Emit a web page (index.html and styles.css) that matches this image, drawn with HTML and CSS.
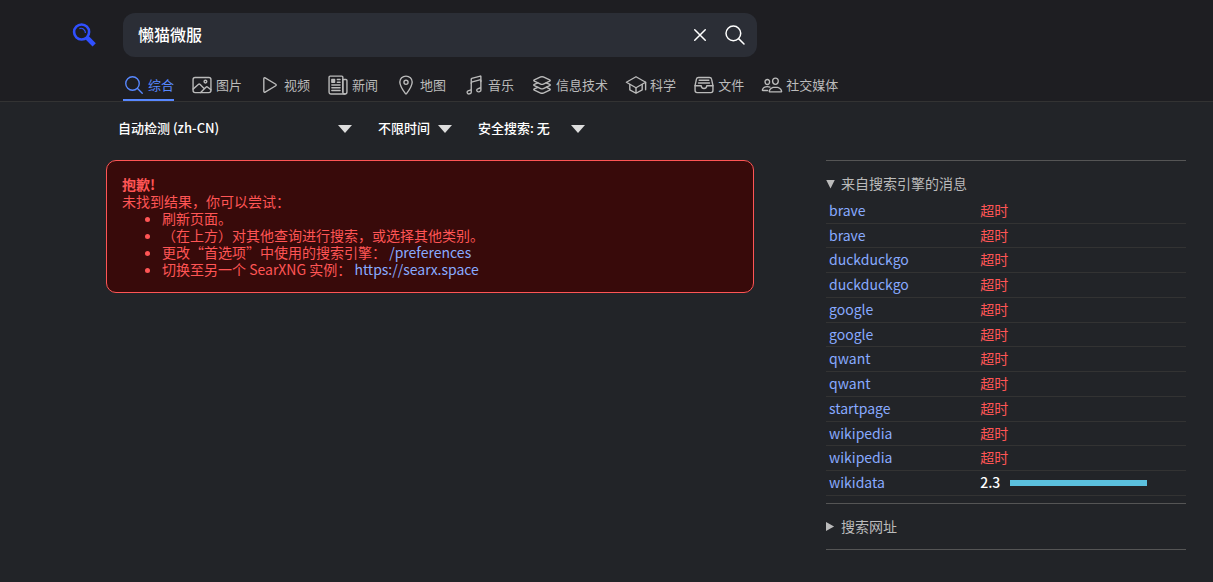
FILE: index.html
```html
<!DOCTYPE html>
<html lang="zh-CN">
<head>
    <meta charset="UTF-8">
    <meta name="viewport" content="width=device-width, initial-scale=1.0">
    <title>懒猫微服 - SearXNG</title>
    <link rel="stylesheet" href="styles.css">
</head>
<body>
    <header class="header">
        <form class="search" role="search">
            <a class="logo" href="#" aria-label="SearXNG">
                <svg viewBox="0 0 24 24" fill="none" stroke="currentColor">
                    <circle cx="9.6" cy="9" r="7.5" stroke-width="2.6"/>
                    <path d="M7.4 5.6a4.4 4.4 0 0 1 6 4.4" stroke-width="1.2"/>
                    <path d="M15 14.6l7.2 7.2" stroke-width="4.6"/>
                </svg>
            </a>
            <div class="search-box">
                <input class="search-input" type="text" value="懒猫微服" aria-label="搜索">
                <button class="search-btn" type="reset" aria-label="清空">
                    <svg class="icon" viewBox="0 0 512 512"><path d="M368 368L144 144M368 144L144 368"/></svg>
                </button>
                <button class="search-btn" type="submit" aria-label="搜索">
                    <svg class="icon" viewBox="0 0 512 512"><path d="M221.09 64a157.09 157.09 0 10157.09 157.09A157.1 157.1 0 00221.09 64zM338.29 338.29L448 448"/></svg>
                </button>
            </div>
        </form>

        <nav class="categories">
            <a class="category active" href="#">
                <svg class="icon" viewBox="0 0 512 512"><path d="M221.09 64a157.09 157.09 0 10157.09 157.09A157.1 157.1 0 00221.09 64zM338.29 338.29L448 448"/></svg>
                <span>综合</span>
            </a>
            <a class="category" href="#">
                <svg class="icon" viewBox="0 0 512 512"><rect x="48" y="80" width="416" height="352" rx="48"/><circle cx="336" cy="176" r="32"/><path d="M304 335.79l-90.66-90.49a32 32 0 00-43.87-1.3L48 352M224 432l123.34-123.34a32 32 0 0143.11-2L464 368"/></svg>
                <span>图片</span>
            </a>
            <a class="category" href="#">
                <svg class="icon" viewBox="0 0 512 512"><path d="M112 111v290c0 17.44 17 28.52 31 20.16l247.9-148.37c12.12-7.25 12.12-26.33 0-33.58L143 90.84c-14-8.36-31 2.72-31 20.16z"/></svg>
                <span>视频</span>
            </a>
            <a class="category" href="#">
                <svg class="icon" viewBox="0 0 512 512"><path d="M368 415.86V72a24.07 24.07 0 00-24-24H72a24.07 24.07 0 00-24 24v352a40.12 40.12 0 0040 40h328"/><path d="M416 464h0a48 48 0 01-48-48V128h72a24 24 0 0124 24v264a48 48 0 01-48 48z"/><path d="M240 128h64M240 192h64M112 256h192M112 320h192M112 384h192"/><path class="solid" d="M176 208h-64a16 16 0 01-16-16v-64a16 16 0 0116-16h64a16 16 0 0116 16v64a16 16 0 01-16 16z"/></svg>
                <span>新闻</span>
            </a>
            <a class="category" href="#">
                <svg class="icon" viewBox="0 0 512 512"><path d="M256 48c-79.5 0-144 61.39-144 137 0 87 96 224.87 131.25 272.49a15.77 15.77 0 0025.5 0C304 409.89 400 272.07 400 185c0-75.61-64.5-137-144-137z"/><circle cx="256" cy="192" r="48"/></svg>
                <span>地图</span>
            </a>
            <a class="category" href="#">
                <svg class="icon" viewBox="0 0 512 512"><path d="M192 218v-6c0-14.84 10-27 24.24-30.59l174.59-46.68A20 20 0 01416 154v22"/><path d="M416 295.94v80c0 13.91-8.93 25.59-22 30l-22 8c-25.9 8.72-52-10.42-52-38h0a33.37 33.37 0 0123-32l51-18.15c13.07-4.4 22-15.94 22-29.85V58a10 10 0 00-12.6-9.61L204 102a16.48 16.48 0 00-12 16v226c0 13.91-8.93 25.6-22 30l-52 18c-13.88 4.68-22 17.22-22 32h0c0 27.58 26.52 46.55 52 38l22-8c13.07-4.4 22-16.08 22-30v-80"/></svg>
                <span>音乐</span>
            </a>
            <a class="category" href="#">
                <svg class="icon" viewBox="0 0 512 512"><path d="M434.8 137.65l-149.36-68.1c-16.19-7.4-42.69-7.4-58.88 0L77.3 137.65c-17.6 8-17.6 21.09 0 29.09l148 67.5c16.89 7.7 44.69 7.7 61.58 0l148-67.5c17.52-8 17.52-21.1-.08-29.09z"/><path d="M160 308.52l-82.7 37.11c-17.6 8-17.6 21.1 0 29.1l148 67.5c16.89 7.69 44.69 7.69 61.58 0l148-67.5c17.6-8 17.6-21.1 0-29.1l-79.94-38.47"/><path d="M160 204.48l-82.8 37.16c-17.6 8-17.6 21.1 0 29.1l148 67.49c16.89 7.7 44.69 7.7 61.58 0l148-67.49c17.7-8 17.7-21.1.1-29.1L352 204.48"/></svg>
                <span>信息技术</span>
            </a>
            <a class="category" href="#">
                <svg class="icon" viewBox="0 0 512 512"><path d="M32 192L256 64l224 128-224 128L32 192z"/><path d="M112 240v128l144 80 144-80V240M480 368V192M256 320v128"/></svg>
                <span>科学</span>
            </a>
            <a class="category" href="#">
                <svg class="icon" viewBox="0 0 512 512"><path d="M384 80H128c-26 0-43 14-48 40L48 272v112a48.14 48.14 0 0048 48h320a48.14 48.14 0 0048-48V272l-32-152c-5-27-23-40-48-40z"/><path d="M48 272h144M320 272h144M192 272a64 64 0 00128 0M144 144h224M128 208h256"/></svg>
                <span>文件</span>
            </a>
            <a class="category" href="#">
                <svg class="icon" viewBox="0 0 512 512"><path d="M402 168c-2.93 40.67-33.1 72-66 72s-63.12-31.32-66-72c-3-42.31 26.37-72 66-72s69 30.46 66 72z"/><path d="M336 304c-65.17 0-127.84 32.37-143.54 95.41-2.08 8.34 3.15 16.59 11.72 16.59h263.65c8.57 0 13.77-8.25 11.72-16.59C463.85 335.36 401.18 304 336 304z"/><path d="M200 185.94c-2.34 32.48-26.72 58.06-53 58.06s-50.7-25.57-53-58.06C91.61 152.15 115.34 128 147 128s55.39 24.77 53 57.94z"/><path d="M206 306c-18.05-8.27-37.93-11.45-59-11.45-52 0-102.1 25.85-114.65 76.2-1.65 6.66 2.53 13.25 9.37 13.25H154"/></svg>
                <span>社交媒体</span>
            </a>
        </nav>
    </header>

    <div class="filters">
        <select class="filter language" aria-label="搜索语言">
            <option>自动检测 (zh-CN)</option>
        </select>
        <select class="filter time" aria-label="时间范围">
            <option>不限时间</option>
        </select>
        <select class="filter safe" aria-label="安全搜索">
            <option>安全搜索: 无</option>
        </select>
    </div>

    <div class="results">
        <main>
            <div class="error-box" role="alert">
                <p><strong>抱歉!</strong></p>
                <p>未找到结果，你可以尝试：</p>
                <ul>
                    <li>刷新页面。</li>
                    <li>（在上方）对其他查询进行搜索，或选择其他类别。</li>
                    <li>更改“首选项”中使用的搜索引擎： <a href="#">/preferences</a></li>
                    <li>切换至另一个 SearXNG 实例： <a href="#">https://searx.space</a></li>
                </ul>
            </div>
        </main>

        <aside class="sidebar">
            <details class="panel" open>
                <summary>来自搜索引擎的消息</summary>
                <table class="engines">
                    <tr><td><a href="#">brave</a></td><td class="timeout">超时</td></tr>
                    <tr><td><a href="#">brave</a></td><td class="timeout">超时</td></tr>
                    <tr><td><a href="#">duckduckgo</a></td><td class="timeout">超时</td></tr>
                    <tr><td><a href="#">duckduckgo</a></td><td class="timeout">超时</td></tr>
                    <tr><td><a href="#">google</a></td><td class="timeout">超时</td></tr>
                    <tr><td><a href="#">google</a></td><td class="timeout">超时</td></tr>
                    <tr><td><a href="#">qwant</a></td><td class="timeout">超时</td></tr>
                    <tr><td><a href="#">qwant</a></td><td class="timeout">超时</td></tr>
                    <tr><td><a href="#">startpage</a></td><td class="timeout">超时</td></tr>
                    <tr><td><a href="#">wikipedia</a></td><td class="timeout">超时</td></tr>
                    <tr><td><a href="#">wikipedia</a></td><td class="timeout">超时</td></tr>
                    <tr>
                        <td><a href="#">wikidata</a></td>
                        <td><div class="timing"><span>2.3</span><div class="bar-track"><div class="bar" style="width: 79%"></div></div></div></td>
                    </tr>
                </table>
            </details>
            <details class="panel">
                <summary>搜索网址</summary>
            </details>
        </aside>
    </div>
</body>
</html>
```
FILE: styles.css
```css
:root {
    --bg: #222428;
    --header-bg: #1e1e22;
    --search-bg: #2b2e36;
    --text: #ffffff;
    --muted: #bbbbbb;
    --link: #8af;
    --accent: #5888ff;
    --error: #ff5555;
    --error-bg: #380a0a;
    --line: #555555;
    --line-dark: #333333;
}

* {
    box-sizing: border-box;
}

body {
    margin: 0;
    min-height: 100vh;
    background: var(--bg);
    color: var(--text);
    font-family: "Noto Sans CJK SC", sans-serif;
    font-size: 14px;
}

a {
    color: var(--link);
    text-decoration: none;
}

.icon {
    display: block;
    width: 22px;
    height: 22px;
    fill: none;
    stroke: currentColor;
    stroke-width: 32;
    stroke-linecap: round;
    stroke-linejoin: round;
}

.icon .solid {
    fill: currentColor;
    stroke: none;
}

/* Header */
.header {
    padding-top: 13px;
    background: var(--header-bg);
    border-bottom: 1px solid var(--line-dark);
}

.search {
    display: flex;
    align-items: center;
    gap: 27px;
    padding: 0 20px 0 72px;
}

.logo {
    flex: none;
    color: #3050ff;
}

.logo svg {
    display: block;
    width: 24px;
    height: 24px;
}

.search-box {
    display: flex;
    align-items: center;
    flex: 1;
    max-width: 634px;
    height: 44px;
    padding-right: 5px;
    background: var(--search-bg);
    border-radius: 12px;
}

.search-input {
    flex: 1;
    min-width: 0;
    height: 44px;
    padding: 0 15px 2px;
    background: none;
    border: none;
    outline: none;
    color: var(--text);
    font-family: inherit;
    font-size: 16px;
    font-weight: 500;
}

.search-btn {
    display: flex;
    justify-content: center;
    width: 35px;
    padding: 0;
    background: none;
    border: none;
    color: var(--text);
    cursor: pointer;
}

.search-btn .icon {
    width: 24px;
    height: 24px;
}

.categories {
    display: flex;
    flex-wrap: wrap;
    gap: 0 17px;
    padding: 13px 20px 0 123px;
}

.category {
    display: flex;
    align-items: center;
    gap: 3px;
    height: 31px;
    border-bottom: 2px solid transparent;
    color: var(--muted);
    font-size: 13px;
    white-space: nowrap;
}

.category.active {
    color: var(--accent);
    border-bottom-color: var(--accent);
}

/* Filters */
.filters {
    display: flex;
    flex-wrap: wrap;
    gap: 8px 26px;
    padding: 16px 20px 0 118px;
}

.filter {
    appearance: none;
    height: 22px;
    padding: 0 0 4px;
    border: none;
    background: url("data:image/svg+xml,%3Csvg xmlns='http://www.w3.org/2000/svg' width='14' height='8'%3E%3Cpath d='M0 0h14L7 8z' fill='%23ddd'/%3E%3C/svg%3E") no-repeat right center;
    color: var(--text);
    font-family: inherit;
    font-size: 13px;
    font-weight: 500;
}

.language {
    width: 234px;
}

.time {
    width: 74px;
}

.safe {
    width: 107px;
}

/* Results */
.results {
    display: grid;
    grid-template-columns: minmax(0, 1fr) 360px;
    align-items: start;
    gap: 72px;
    padding: 20px 27px 32px 106px;
}

.error-box {
    padding: 15px 15px 14px;
    background: var(--error-bg);
    border: 1px solid var(--error);
    border-radius: 10px;
    color: var(--error);
    line-height: 17px;
}

.error-box p {
    margin: 0;
}

.error-box ul {
    margin: 0;
    padding-left: 40px;
}

/* Sidebar */
.sidebar {
    border-top: 1px solid var(--line);
}

.panel {
    border-bottom: 1px solid var(--line);
}

.panel[open] {
    padding-bottom: 7px;
}

.panel summary {
    display: flex;
    align-items: center;
    gap: 6px;
    height: 45px;
    padding-bottom: 2px;
    color: var(--muted);
    list-style: none;
    cursor: pointer;
}

.panel[open] summary {
    height: 38px;
    padding-top: 8px;
}

.panel summary::before {
    content: "";
    width: 9px;
    height: 9px;
    margin-top: 2px;
    background: currentColor;
    clip-path: polygon(0 0, 90% 50%, 0 100%);
}

.panel[open] summary::before {
    clip-path: polygon(0 0, 100% 0, 50% 100%);
}

.engines {
    width: 100%;
    height: 297px;
    border-collapse: collapse;
    table-layout: fixed;
}

.engines td {
    padding: 0 3px 2px;
    border-bottom: 1px solid var(--line-dark);
    line-height: 20px;
}

.engines td:first-child {
    width: 42%;
}

.timeout {
    color: var(--error);
}

.timing {
    display: flex;
    align-items: center;
    gap: 10px;
    font-weight: 500;
}

.bar-track {
    flex: 1;
    padding-top: 2px;
}

.bar {
    height: 6px;
    background: #5bc0de;
}

@media (max-width: 900px) {
    .search,
    .categories,
    .filters,
    .results {
        padding-left: 20px;
        padding-right: 20px;
    }

    .results {
        grid-template-columns: minmax(0, 1fr);
        gap: 24px;
    }
}
```
